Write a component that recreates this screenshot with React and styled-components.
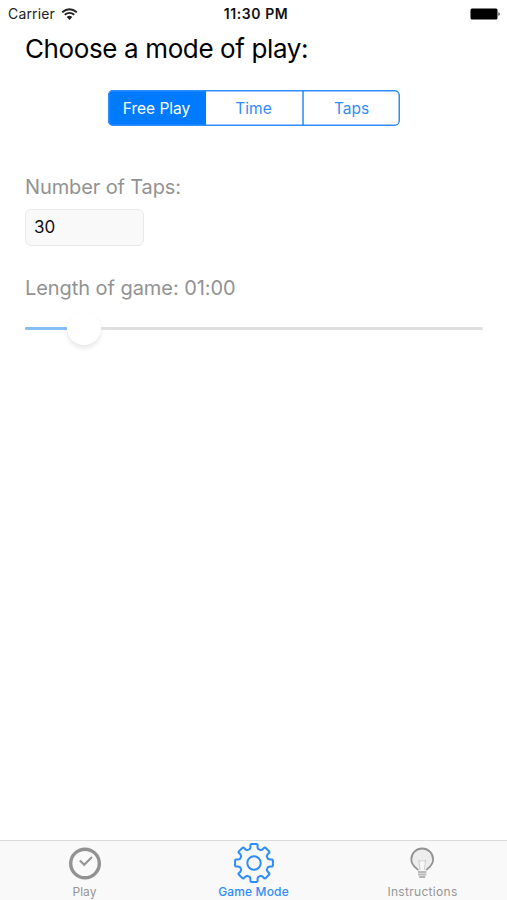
import React from "react";
import styled, { createGlobalStyle } from "styled-components";

const GlobalStyle = createGlobalStyle`
  * {
    box-sizing: border-box;
  }
  body {
    margin: 0;
    background: #fff;
    font-family: Inter, "Liberation Sans", sans-serif;
  }
`;

const Screen = styled.div`
  display: flex;
  flex-direction: column;
  width: 507px;
  height: 900px;
  overflow: hidden;
  background: #fff;
`;

const StatusBar = styled.header`
  display: grid;
  grid-template-columns: 1fr auto 1fr;
  align-items: center;
  height: 27px;
  padding: 0 6px 0 8px;
  color: #222;
  font-size: 14px;
`;

const Carrier = styled.div`
  display: flex;
  align-items: center;
  gap: 6px;
  letter-spacing: 0.15px;
`;

const Clock = styled.div`
  padding-left: 3px;
  color: #111;
  font-size: 14px;
  font-weight: 600;
  letter-spacing: 0.6px;
`;

const BatteryIcon = styled.svg`
  justify-self: end;
`;

const Content = styled.main`
  display: flex;
  flex: 1;
  flex-direction: column;
  align-items: flex-start;
  padding: 0 25px;
`;

const Title = styled.h1`
  margin: 5px 0 0;
  height: 34px;
  color: #000;
  font-size: 26px;
  font-weight: 400;
  line-height: 34px;
  letter-spacing: -0.38px;
  white-space: nowrap;
`;

const Segments = styled.div`
  position: relative;
  display: flex;
  align-self: center;
  width: 292px;
  height: 36px;
  margin: 24px 0 47px;
  overflow: hidden;
  border-radius: 5px;

  &::after {
    content: "";
    position: absolute;
    inset: 0;
    border-radius: 5px;
    box-shadow: inset 0 0 0 1.5px #2f8dfb;
    pointer-events: none;
  }
`;

const Segment = styled.button`
  flex: ${(p) => (p.$active ? "0 0 98px" : "1")};
  padding: 0;
  border: 0;
  border-left: ${(p) => (p.$divided ? "2px solid #5ba6fb" : "0")};
  background: ${(p) => (p.$active ? "#007aff" : "#fff")};
  color: ${(p) => (p.$active ? "#fff" : "#2f8dfb")};
  font-family: inherit;
  font-size: 15.5px;
`;

const Label = styled.label`
  height: 28px;
  color: #929292;
  font-size: 20px;
  line-height: 29px;
  white-space: nowrap;
  letter-spacing: ${(p) => p.$spacing || "0"};
`;

const TapsInput = styled.input`
  width: 119px;
  height: 37px;
  margin: 8px 0 28px;
  padding: 0 8px 1px;
  border: 1px solid #e9e9e9;
  border-radius: 6px;
  background: #f9f9f9;
  color: #111;
  font-family: inherit;
  font-size: 17px;
`;

const Slider = styled.div`
  display: flex;
  align-items: center;
  width: 458px;
  height: 35px;
  margin-top: 9px;
`;

const Track = styled.div`
  flex: ${(p) => (p.$filled ? "0 0 42px" : "1")};
  height: 3px;
  border-radius: 1px;
  background: ${(p) => (p.$filled ? "#86bdfb" : "#dfdfdf")};
`;

const Thumb = styled.div`
  width: 34px;
  height: 33px;
  border-radius: 50%;
  background: #fff;
  box-shadow: 0 3px 5px rgba(0, 0, 0, 0.1);
`;

const TabBar = styled.nav`
  display: flex;
  height: 60px;
  border-top: 1px solid #dadada;
  background: #f9f9f9;
`;

const Tab = styled.div`
  display: flex;
  flex: 1;
  flex-direction: column;
  align-items: center;
  color: ${(p) => (p.$active ? "#2f8dfb" : "#969696")};
  font-size: 12px;
  font-weight: ${(p) => (p.$active ? 500 : 400)};
  line-height: 14px;
  letter-spacing: ${(p) => p.$spacing || "0"};

  & svg {
    margin: 2px 0;
  }
`;

// one tooth and the valley to its right, repeated every 45 degrees
const toothPoints = [
  [-11, 18.7],
  [-8, 19.1],
  [8, 19.1],
  [11, 18.7],
  [13, 15.9],
  [17, 14.5],
  [28, 14.5],
  [32, 15.9],
];

function gearPath() {
  const points = [];
  for (let i = 0; i < 8; i++) {
    toothPoints.forEach(([angle, radius]) => {
      const a = ((i * 45 + angle) * Math.PI) / 180;
      const x = 20 + Math.sin(a) * radius;
      const y = 20 - Math.cos(a) * radius;
      points.push(`${x.toFixed(2)} ${y.toFixed(2)}`);
    });
  }
  return `M${points.join("L")}Z`;
}

function WifiIcon() {
  return (
    <svg width="17" height="12" viewBox="0 0 17 12" fill="none" stroke="#222">
      <path d="M1.2 4.2Q8.5-1.8 15.8 4.2" strokeWidth="1.9" />
      <path d="M3.7 6.8Q8.5 2.9 13.3 6.8" strokeWidth="1.8" />
      <path d="M5.7 9Q8.5 6.4 11.3 9L8.5 12Z" fill="#222" stroke="none" />
    </svg>
  );
}

function ClockIcon() {
  return (
    <svg width="40" height="40" fill="none" stroke="#929292">
      <circle cx="20" cy="20.5" r="14.3" strokeWidth="3.4" />
      <path d="M14.8 17.5L19.2 21.8L27 14" strokeWidth="2" />
    </svg>
  );
}

function GearIcon() {
  return (
    <svg width="40" height="40" fill="none" stroke="#2f8dfb" overflow="visible">
      <path d={gearPath()} strokeWidth="2" strokeLinejoin="round" />
      <circle cx="20" cy="20" r="6.7" strokeWidth="2" />
    </svg>
  );
}

function BulbIcon() {
  return (
    <svg width="40" height="40" viewBox="0.8 0 40 40" fill="none" stroke="#929292">
      <path
        d="M16 27.3C15.5 25.5 9.1 23.2 9.1 16.4A10.9 10.9 0 0 1 30.9 16.4C30.9 23.2 24.5 25.5 24 27.3"
        fill="#ededed"
        strokeWidth="1.8"
      />
      <path
        d="M18 27L16.5 17L18.5 18.5L20 17L21.5 18.5L23.5 17L22 27"
        fill="#f8f8f8"
        stroke="#cfcfcf"
        strokeWidth="1"
      />
      <path d="M15.8 29H24.2M15.8 31.6H24.2" stroke="#b8b8b8" strokeWidth="2" />
      <path d="M17 34H23" stroke="#aaa" strokeWidth="1.8" />
    </svg>
  );
}

export default function App() {
  return (
    <Screen>
      <GlobalStyle />
      <StatusBar>
        <Carrier>
          Carrier
          <WifiIcon />
        </Carrier>
        <Clock>11:30 PM</Clock>
        <BatteryIcon width="31" height="12">
          <rect x="0.5" y="0.5" width="27" height="11" rx="1.5" />
          <path d="M28.5 4Q31 6 28.5 8Z" fill="#222" />
        </BatteryIcon>
      </StatusBar>
      <Content>
        <Title>Choose a mode of play:</Title>
        <Segments>
          <Segment $active>Free Play</Segment>
          <Segment>Time</Segment>
          <Segment $divided>Taps</Segment>
        </Segments>
        <Label htmlFor="taps" $spacing="-0.12px">
          Number of Taps:
        </Label>
        <TapsInput id="taps" defaultValue="30" />
        <Label as="div" $spacing="-0.06px">
          Length of game: 01:00
        </Label>
        <Slider>
          <Track $filled />
          <Thumb />
          <Track />
        </Slider>
      </Content>
      <TabBar>
        <Tab>
          <ClockIcon />
          Play
        </Tab>
        <Tab $active $spacing="0.15px">
          <GearIcon />
          Game Mode
        </Tab>
        <Tab $spacing="0.3px">
          <BulbIcon />
          Instructions
        </Tab>
      </TabBar>
    </Screen>
  );
}
